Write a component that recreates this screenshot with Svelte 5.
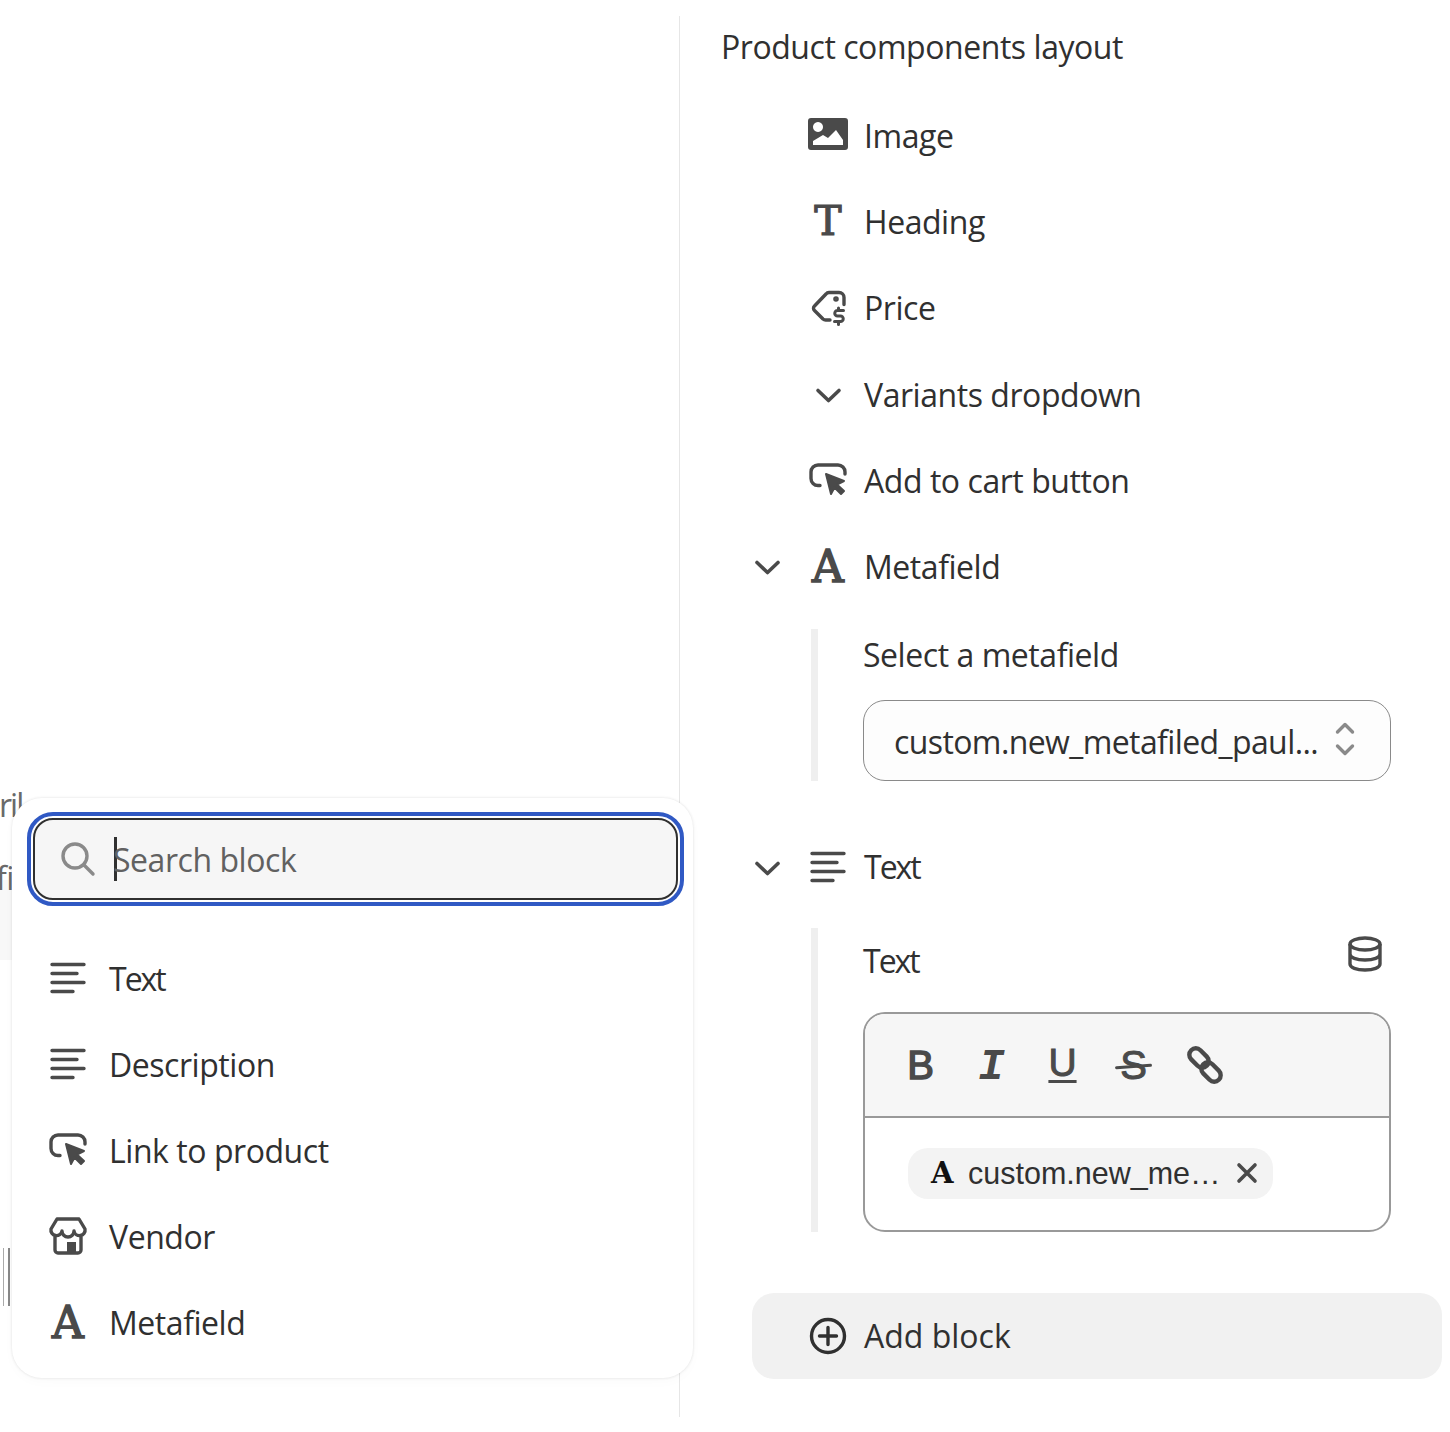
<script>
  const popupItems = [
    { icon: "lines", label: "Text" },
    { icon: "lines", label: "Description" },
    { icon: "cursor", label: "Link to product" },
    { icon: "store", label: "Vendor" },
    { icon: "letter", label: "Metafield" }
  ];
  const tools = ["B", "I", "U", "S", "link"];
</script>

{#snippet icon(name)}
  {#if name === "image"}
    <svg class="img-ico" viewBox="0 0 40 32" width="40" height="32">
      <path fill="#4a4a4a" fill-rule="evenodd" d="M3 0h34a3 3 0 0 1 3 3v26a3 3 0 0 1-3 3H3a3 3 0 0 1-3-3V3a3 3 0 0 1 3-3zM5 27h30v-5l-7-10-8 8-5-3-10 6zM10 4a5 5 0 1 0 .01 0z" />
    </svg>
  {:else if name === "tag"}
    <svg viewBox="0 0 40 40" width="40" height="40" fill="none" stroke="#4a4a4a" stroke-width="3.400" stroke-linecap="round" stroke-linejoin="round">
      <path d="M22 32h-4a4 4 0 0 1-3-1L6.500 22.500a3 3 0 0 1 0-4.500L18 6a4 4 0 0 1 3-1.500h10a5 5 0 0 1 5 5v7" />
      <circle cx="28" cy="11" r="1.100" fill="#4a4a4a" />
      <path d="M35.500 22.500h-6a2.700 2.700 0 0 0 0 5.500h3a2.700 2.700 0 0 1 0 5.500h-6M30.500 20v2M30.500 34v2.500" stroke-width="3" />
    </svg>
  {:else if name === "chevron"}
    <svg viewBox="0 0 40 40" width="40" height="40" fill="none" stroke="#4a4a4a" stroke-width="3.600" stroke-linecap="round" stroke-linejoin="round">
      <path d="M10 16.500L20.500 26.500 31 16.500" />
    </svg>
  {:else if name === "cursor"}
    <svg viewBox="0 0 40 40" width="40" height="40" fill="none" stroke="#4a4a4a" stroke-width="3.400" stroke-linecap="round" stroke-linejoin="round">
      <path d="M12 25.500h-2a7 7 0 0 1-7-7V12a7 7 0 0 1 7-7h20a7 7 0 0 1 7 7v2" />
      <path fill="#4a4a4a" stroke-width="2" d="M18 14l18 7-7 3.500 7 6.500-3 3-6.500-6.500L23 34z" />
    </svg>
  {:else if name === "lines"}
    <svg viewBox="0 0 40 40" width="40" height="40" fill="none" stroke="#4a4a4a" stroke-width="3.400" stroke-linecap="round">
      <path d="M4 6.500h32M4 15.500h25M4 24.500h32M4 33.500h21" />
    </svg>
  {:else if name === "letter"}
    <span class="serif-a">A</span>
  {:else if name === "heading"}
    <span class="serif-t">T</span>
  {:else if name === "store"}
    <svg viewBox="0 0 40 40" width="40" height="40" fill="none" stroke="#4a4a4a" stroke-width="3.400" stroke-linecap="round" stroke-linejoin="round">
      <path d="M9 3h22l6 10a5.500 5.500 0 0 1-11 2 6 6 0 0 1-12 0 5.500 5.500 0 0 1-11-2z" />
      <path d="M7 21v13a3 3 0 0 0 3 3h20a3 3 0 0 0 3-3V21" />
      <path fill="#4a4a4a" stroke="none" d="M19 26h9v11h-9z" />
    </svg>
  {:else if name === "plus"}
    <svg viewBox="0 0 40 40" width="40" height="40" fill="none" stroke="#303030" stroke-width="3.400" stroke-linecap="round">
      <circle cx="20" cy="20" r="16.500" />
      <path d="M20 11.500v17M11.500 20h17" />
    </svg>
  {/if}
{/snippet}

<div class="page">
  <aside class="panel">
    <h2 class="title">Product components layout</h2>

    <div class="row">
      <span class="chev"></span>
      <span class="ico">{@render icon("image")}</span>
      <span class="label">Image</span>
    </div>
    <div class="row">
      <span class="chev"></span>
      <span class="ico">{@render icon("heading")}</span>
      <span class="label">Heading</span>
    </div>
    <div class="row">
      <span class="chev"></span>
      <span class="ico">{@render icon("tag")}</span>
      <span class="label">Price</span>
    </div>
    <div class="row">
      <span class="chev"></span>
      <span class="ico">{@render icon("chevron")}</span>
      <span class="label">Variants dropdown</span>
    </div>
    <div class="row">
      <span class="chev"></span>
      <span class="ico">{@render icon("cursor")}</span>
      <span class="label">Add to cart button</span>
    </div>
    <div class="row">
      <span class="chev">{@render icon("chevron")}</span>
      <span class="ico">{@render icon("letter")}</span>
      <span class="label">Metafield</span>
    </div>

    <section class="sub first">
      <div class="field-label">Select a metafield</div>
      <div class="select">
        <span>custom.new_metafiled_paul...</span>
        <svg viewBox="0 0 20 34" width="20" height="34" fill="none" stroke="#8a8a8a" stroke-width="3.400" stroke-linecap="round" stroke-linejoin="round">
          <path d="M2.500 10L10 2.500 17.500 10M2.500 24l7.500 7.500 7.500-7.500" />
        </svg>
      </div>
    </section>

    <div class="row text-row">
      <span class="chev">{@render icon("chevron")}</span>
      <span class="ico">{@render icon("lines")}</span>
      <span class="label tight">Text</span>
    </div>

    <section class="sub second">
      <div class="field-label with-db">
        <span class="tight">Text</span>
        <svg viewBox="0 0 36 36" width="36" height="36" fill="none" stroke="#4a4a4a" stroke-width="3.400" stroke-linejoin="round">
          <ellipse cx="18" cy="8" rx="15" ry="6" />
          <path d="M3 8v20c0 3.500 6.500 6 15 6s15-2.500 15-6V8M3 18c0 3.500 6.500 6 15 6s15-2.500 15-6" />
        </svg>
      </div>
      <div class="editor">
        <div class="toolbar">
          {#each tools as t}
            <span class="tool">
              {#if t === "B"}
                <span class="g-b">B</span>
              {:else if t === "I"}
                <span class="g-i">I</span>
              {:else if t === "U"}
                <span class="g-u">U</span>
              {:else if t === "S"}
                <span class="g-s">S</span>
              {:else}
                <svg viewBox="0 0 40 40" width="40" height="40" fill="none" stroke="#4a4a4a" stroke-width="4.400">
                  <rect x="3" y="6.500" width="22" height="13" rx="6.500" transform="rotate(45 14 13)" />
                  <rect x="15" y="20.500" width="22" height="13" rx="6.500" transform="rotate(45 26 27)" />
                </svg>
              {/if}
            </span>
          {/each}
        </div>
        <div class="editor-body">
          <span class="chip">
            <span class="chip-a">A</span>
            <span class="chip-text">custom.new_me…</span>
            <svg viewBox="0 0 24 24" width="24" height="24" fill="none" stroke="#4a4a4a" stroke-width="3.600" stroke-linecap="round">
              <path d="M4 4l16 16M20 4L4 20" />
            </svg>
          </span>
        </div>
      </div>
    </section>

    <button class="add">
      <span class="ico">{@render icon("plus")}</span>
      <span class="label">Add block</span>
    </button>
  </aside>

  <!-- bits of the page underneath that stick out past the popup -->
  <span class="stray-shade"></span>
  <span class="stray ril">ril</span>
  <span class="stray fi">fi</span>
  <span class="stray-line"></span>

  <div class="popup">
    <div class="search">
      <svg viewBox="0 0 36 36" width="36" height="36" fill="none" stroke="#8a8a8a" stroke-width="3.400" stroke-linecap="round">
        <circle cx="15" cy="15" r="12" />
        <path d="M24 24l9 9" />
      </svg>
      <span class="caret"></span>
      <span class="placeholder">Search block</span>
    </div>
    <div class="items">
      {#each popupItems as item}
        <div class="item">
          <span class="ico">{@render icon(item.icon)}</span>
          <span class="label" class:tight={item.label === "Text"}>{item.label}</span>
        </div>
      {/each}
    </div>
  </div>
</div>

<style>
  :global(body) {
    background: #fff;
  }
  .page {
    position: relative;
    width: 1450px;
    height: 1432px;
    overflow: hidden;
    font-family: "Open Sans", "Noto Sans", sans-serif;
    color: #303030;
    font-size: 32px;
    letter-spacing: -0.45px;
  }
  .tight {
    letter-spacing: -2px;
  }
  .panel {
    box-sizing: border-box;
    margin: 16px 0 0 679px;
    height: 1401px;
    border-left: 1px solid #e6e6e6;
    padding-left: 72px;
    padding-right: 8px;
    display: flex;
    flex-direction: column;
  }
  .title {
    margin: 0 0 14.400px -31px;
    height: 62px;
    line-height: 62px;
    font-size: 32px;
    font-weight: 400;
  }
  .row {
    display: flex;
    align-items: center;
    height: 86.200px;
    flex: none;
  }
  .chev {
    width: 30px;
    margin-right: 26px;
    display: flex;
    justify-content: center;
  }
  .chev svg {
    flex: none;
  }
  .ico {
    width: 40px;
    height: 40px;
    margin-right: 16px;
    display: flex;
    align-items: center;
    justify-content: center;
    flex: none;
  }
  .img-ico {
    margin-top: -3px;
  }
  .serif-a,
  .serif-t {
    font-family: "DejaVu Serif", serif;
    font-weight: 400;
    line-height: 40px;
    letter-spacing: 0;
    color: #4a4a4a;
  }
  .serif-a {
    font-size: 44px;
    -webkit-text-stroke: 1.5px #4a4a4a;
    margin-top: 2px;
  }
  .serif-t {
    font-size: 41px;
    -webkit-text-stroke: 1.200px #4a4a4a;
    margin-top: -2px;
  }
  .sub {
    margin-left: 59px;
    margin-right: 51px;
    border-left: 7px solid #efefef;
    padding-left: 45px;
  }
  .sub.first {
    margin-top: 19.400px;
    height: 152px;
  }
  .text-row {
    margin-top: 42.800px;
  }
  .sub.second {
    margin-top: 18px;
    height: 304px;
  }
  .field-label {
    height: 52px;
    line-height: 52px;
    margin-bottom: 19px;
  }
  .with-db {
    height: 66px;
    line-height: 66px;
    margin-bottom: 18px;
    display: flex;
    justify-content: space-between;
    align-items: flex-start;
    padding-right: 8px;
  }
  .with-db svg {
    margin-top: 8px;
  }
  .select {
    box-sizing: border-box;
    height: 81px;
    border: 1px solid #8a8a8a;
    border-radius: 22px;
    padding: 0 35px 0 30px;
    display: flex;
    align-items: center;
    justify-content: space-between;
    background: #fdfdfd;
    letter-spacing: -0.6px;
  }
  .select span {
    margin-top: 3px;
  }
  .select svg {
    margin-top: -2px;
  }
  .editor {
    box-sizing: border-box;
    height: 220px;
    border: 2px solid #999;
    border-radius: 22px;
    overflow: hidden;
  }
  .toolbar {
    height: 102px;
    background: #f6f6f6;
    border-bottom: 2px solid #999;
    display: flex;
    align-items: center;
    padding-left: 20px;
  }
  .tool {
    width: 71px;
    display: flex;
    justify-content: center;
    color: #4a4a4a;
    font-size: 40px;
    line-height: 44px;
    letter-spacing: 0;
    font-family: "Liberation Sans", sans-serif;
  }
  .g-b {
    -webkit-text-stroke: 1.500px #4a4a4a;
  }
  .g-u,
  .g-s {
    -webkit-text-stroke: 1px #4a4a4a;
  }
  .g-i {
    font-family: "Liberation Mono", monospace;
    font-style: italic;
    font-weight: 700;
    font-size: 44px;
    margin-top: 4px;
  }
  .g-u {
    font-size: 39px;
    text-decoration: underline;
    text-decoration-thickness: 3px;
    text-underline-offset: 4px;
    margin-top: -3px;
  }
  .g-s {
    position: relative;
  }
  /* the strike runs past the letter and tilts a little */
  .g-s::after {
    content: "";
    position: absolute;
    left: -5px;
    right: -5px;
    top: 22px;
    height: 3px;
    border-radius: 2px;
    background: #4a4a4a;
    transform: rotate(-4deg);
  }
  .editor-body {
    padding: 30px 0 0 43px;
  }
  .chip {
    box-sizing: border-box;
    display: inline-flex;
    align-items: center;
    height: 51px;
    width: 365px;
    padding: 0 14px 0 23px;
    border-radius: 20px;
    background: #f3f3f3;
    font-family: "Liberation Sans", sans-serif;
    font-size: 30.500px;
    letter-spacing: 0;
  }
  .chip-a {
    font-family: "DejaVu Serif", serif;
    font-weight: 700;
    font-size: 29px;
    color: #111;
    width: 37px;
  }
  .chip-text {
    flex: 1;
    white-space: nowrap;
  }
  .add {
    box-sizing: border-box;
    margin-top: 61px;
    height: 86px;
    width: 690px;
    flex: none;
    border: 0;
    border-radius: 22px;
    background: #f1f1f1;
    display: flex;
    align-items: center;
    padding: 0 0 0 56px;
    font: inherit;
    letter-spacing: 0;
    color: inherit;
  }
  .stray {
    position: absolute;
    color: #6a6a6a;
    font-size: 32px;
    line-height: 32px;
  }
  .ril {
    top: 789px;
    left: -1px;
    letter-spacing: -2px;
  }
  .fi {
    top: 862px;
    left: -4px;
  }
  .stray-shade {
    position: absolute;
    left: 0;
    top: 880px;
    width: 12px;
    height: 80px;
    background: #f8f8f8;
  }
  .stray-line {
    position: absolute;
    left: 3px;
    top: 1248px;
    width: 7px;
    height: 58px;
    border-left: 1px solid #aaa;
    border-right: 2px solid #888;
    box-sizing: border-box;
  }
  .popup {
    position: absolute;
    left: 12px;
    top: 798px;
    width: 681px;
    height: 580px;
    box-sizing: border-box;
    background: #fff;
    border-radius: 30px;
    box-shadow: 0 0 3px rgba(0, 0, 0, 0.12), 0 4px 12px rgba(0, 0, 0, 0.02);
    padding: 20px 15px 0 21px;
  }
  .search {
    box-sizing: border-box;
    height: 82px;
    border: 2px solid #303030;
    border-radius: 20px;
    background: #f6f6f6;
    outline: 4px solid #3059c4;
    outline-offset: 2px;
    display: flex;
    align-items: center;
    padding-left: 25px;
  }
  .caret {
    width: 3px;
    height: 44px;
    background: #303030;
    margin: 0 -4px 0 18px;
    flex: none;
  }
  .placeholder {
    color: #616161;
  }
  .items {
    margin-top: 35px;
    margin-left: -21px;
    padding-left: 36px;
  }
  .item {
    display: flex;
    align-items: center;
    height: 86px;
  }
  .item .ico {
    margin-right: 21px;
  }
</style>
